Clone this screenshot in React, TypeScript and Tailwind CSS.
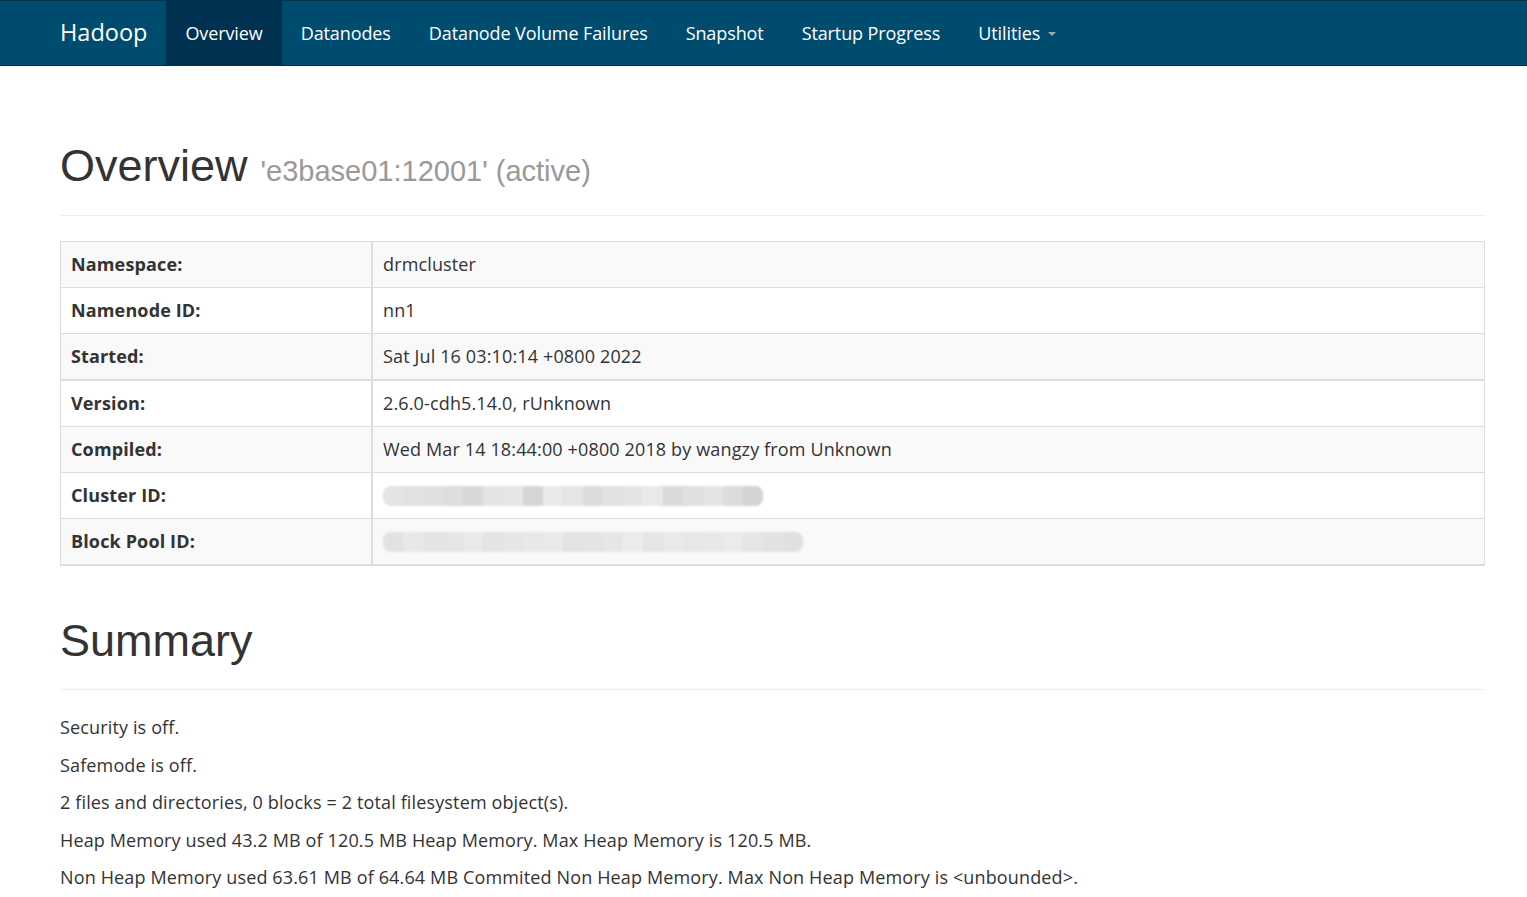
import React from "react";

const body = { fontFamily: '"Open Sans", "Noto Sans", sans-serif' };
const head = { fontFamily: '"Liberation Sans", Arial, sans-serif' };

const rows1 = [
  ["Namespace:", "drmcluster"],
  ["Namenode ID:", "nn1"],
  ["Started:", "Sat Jul 16 03:10:14 +0800 2022"],
];
const rows2: [string, string | null][] = [
  ["Version:", "2.6.0-cdh5.14.0, rUnknown"],
  ["Compiled:", "Wed Mar 14 18:44:00 +0800 2018 by wangzy from Unknown"],
  ["Cluster ID:", null],
  ["Block Pool ID:", null],
];

const shades1 = ["#e4e4e4", "#e2e2e2", "#e0e0df", "#dedede", "#d8d8d8", "#e3e4e6", "#e6e6e4", "#d6d6d6", "#ebeae8", "#e3e5e8", "#dbdbdb", "#e2e2e2", "#e4e4e4", "#e9e9e9", "#d9d9d9", "#e0e0df", "#e4e4e4", "#dcdcdc", "#d3d2d4"];
const shades2 = ["#e2e2e2", "#e8e8e8", "#e3e4e6", "#e5e5e5", "#e9e9e9", "#e4e4e4", "#e6e6e6", "#e8e8e8", "#eaeaea", "#e3e3e3", "#e4e4e4", "#e6e6e6", "#ebebeb", "#e5e5e5", "#e9e9e9", "#e7e7e7", "#e8e8e8", "#ebebeb", "#e5e5e5", "#e2e2e2", "#e0e0e0"];

function Blur({ shades }: { shades: string[] }) {
  return (
    <div className="flex h-[20px] overflow-hidden rounded-[8px] blur-[1px]">
      {shades.map((c, i) => (
        <div key={i} className="h-full w-[20px]" style={{ backgroundColor: c }} />
      ))}
    </div>
  );
}

export default function App() {
  return (
    <div className="min-h-[897px] bg-white text-[#333]" style={body}>
      <nav className="h-[66px] border-y border-[#01334a] bg-[#004c6e]">
        <div className="flex h-full items-stretch px-[60px]">
          <div className="flex items-center pr-[19px] text-[23.5px] text-white">Hadoop</div>
          {["Overview", "Datanodes", "Datanode Volume Failures", "Snapshot", "Startup Progress"].map((t, i) => (
            <div
              key={t}
              className={`flex items-center px-[19px] text-[18px] tracking-[-0.1px] text-white ${i === 0 ? "bg-[#003150]" : ""}`}
            >
              {t}
            </div>
          ))}
          <div className="flex items-center gap-[8px] px-[19px] text-[18px] tracking-[-0.1px] text-white">
            Utilities
            <span className="mt-[2px] h-0 w-0 border-x-[4px] border-t-[4px] border-x-transparent border-t-[#9aa9b2]" />
          </div>
        </div>
      </nav>

      <div className="px-[60px] pr-[42px]">
        <div className="mt-[72px] flex items-baseline gap-[13px] pb-[21px] border-b border-[#eee]" style={head}>
          <span className="text-[45px] leading-[56px] text-[#333]">Overview</span>
          <span className="text-[29px] text-[#999]">'e3base01:12001' (active)</span>
        </div>

        <div className="mt-[25px] border border-[#ddd] text-[18px] tracking-[0.14px]">
          {rows1.map(([k, v], i) => (
            <div key={k} className={`flex ${i > 0 ? "h-[46px] border-t border-[#ddd]" : "h-[45px]"} ${i % 2 === 0 ? "bg-[#f9f9f9]" : "bg-white"}`}>
              <div className="flex w-[312px] shrink-0 items-center border-r-2 border-[#ddd] pl-[10px] font-bold">{k}</div>
              <div className="flex items-center pl-[10px]">{v}</div>
            </div>
          ))}
          {rows2.map(([k, v], i) => (
            <div
              key={k}
              className={`flex ${i === 0 ? "h-[47px] border-t-2" : "h-[46px] border-t"} border-[#ddd] ${i % 2 === 0 ? "bg-white" : "bg-[#f9f9f9]"}`}
            >
              <div className="flex w-[312px] shrink-0 items-center border-r-2 border-[#ddd] pl-[10px] font-bold">{k}</div>
              <div className="flex items-center pl-[10px]">
                {v ?? <Blur shades={k === "Cluster ID:" ? shades1 : shades2} />}
              </div>
            </div>
          ))}
        </div>
        <div className="h-px bg-[#ddd]" />

        <div className="mt-[47px] pb-[20px] border-b border-[#eee]" style={head}>
          <span className="text-[45px] leading-[56px] text-[#333]">Summary</span>
        </div>

        <div className="mt-[25px] flex flex-col gap-[12px] text-[18px] leading-[25.5px] tracking-[0.14px]">
          <p>Security is off.</p>
          <p>Safemode is off.</p>
          <p>2 files and directories, 0 blocks = 2 total filesystem object(s).</p>
          <p>Heap Memory used 43.2 MB of 120.5 MB Heap Memory. Max Heap Memory is 120.5 MB.</p>
          <p>Non Heap Memory used 63.61 MB of 64.64 MB Commited Non Heap Memory. Max Non Heap Memory is &lt;unbounded&gt;.</p>
        </div>
      </div>
    </div>
  );
}
